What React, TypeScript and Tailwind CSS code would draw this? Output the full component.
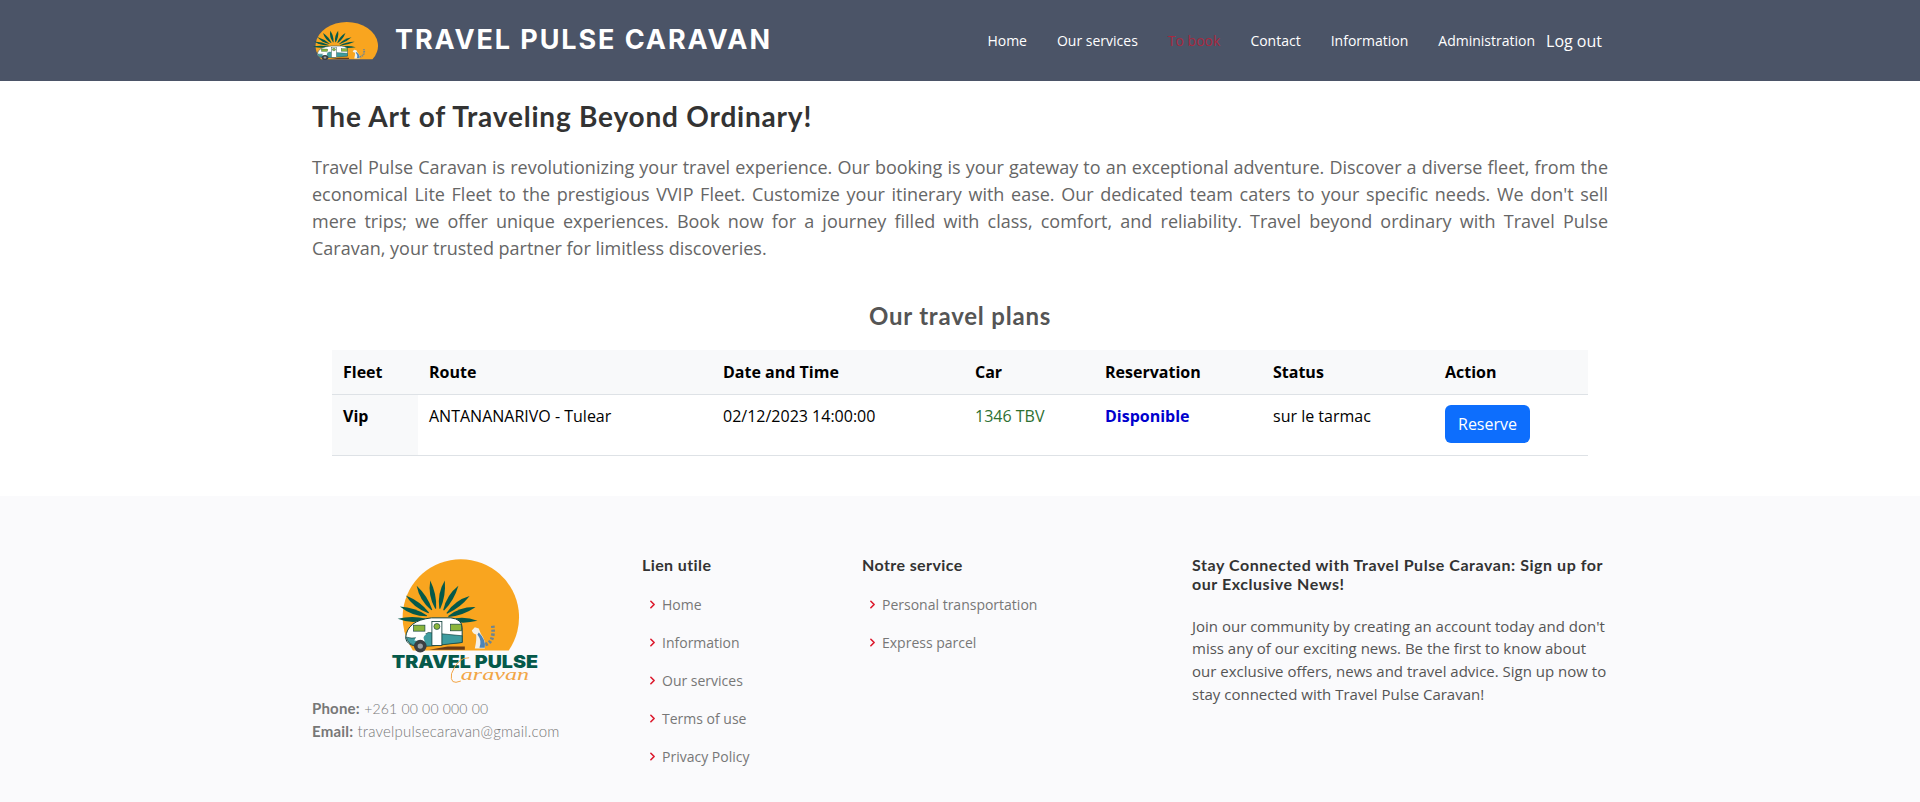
import { ChevronRight } from "lucide-react";

const navLinks = ["Home", "Our services", "To book", "Contact", "Information", "Administration"];
const usefulLinks = ["Home", "Information", "Our services", "Terms of use", "Privacy Policy"];
const serviceLinks = ["Personal transportation", "Express parcel"];
const columns = ["Fleet", "Route", "Date and Time", "Car", "Reservation", "Status", "Action"];
const frondAngles = [-90, -72, -54, -33, -12, 9, 30, 52, 70, 90];

function LogoScene() {
  return (
    <>
      <path d="M336 330 A175 175 0 1 1 624 330 Z" fill="#f9a51f" />
      {frondAngles.map((angle) => (
        <path
          key={angle}
          d="M0 -34 Q-14 -78 3 -120 Q14 -76 3 -34 Z"
          fill="#05594a"
          transform={`translate(410 238) rotate(${angle})`}
        />
      ))}
      <path d="M314 292 Q318 240 392 232 L450 232 Q484 236 484 262 L484 306 L350 318 Q316 314 314 292 Z" fill="#fff" stroke="#12413c" strokeWidth="3" />
      <path d="M316 290 Q350 300 382 276 L484 286 L484 306 L390 317 L350 318 Q320 312 316 290 Z" fill="#3f9c9f" stroke="#12413c" strokeWidth="2" />
      <path d="M340 300 Q352 272 376 282 Q362 288 372 304 Z" fill="#fff" />
      <rect x="338" y="254" width="34" height="18" fill="#8cb63c" stroke="#12413c" strokeWidth="2" />
      <rect x="393" y="243" width="30" height="72" fill="#fff" stroke="#12413c" strokeWidth="2.5" />
      <circle cx="408" cy="258" r="9" fill="#8cb63c" stroke="#12413c" strokeWidth="2" />
      <rect x="449" y="251" width="33" height="20" fill="#8cb63c" stroke="#12413c" strokeWidth="2" />
      <path d="M440 318 L492 318 L492 328 L385 328 Z" fill="#6a3b16" />
      <circle cx="358" cy="317" r="19" fill="#3b3f42" />
      <circle cx="358" cy="317" r="8" fill="#9aa0a3" />
      <path d="M513 270 L522 260 L534 264 L540 280 Q556 300 552 324 L522 324 Q528 298 526 282 Q516 280 513 270 Z" fill="#f4f1e8" />
      <path d="M534 276 Q556 298 552 322 L536 322 Q544 300 530 282 Z" fill="#4d84b8" />
      <path d="M554 312 Q582 304 576 256" fill="none" stroke="#6e8592" strokeWidth="11" strokeDasharray="7 5" />
    </>
  );
}

function FooterLogo() {
  return (
    <svg viewBox="270 50 445 395" className="mx-auto h-[132px] w-[148px]">
      <LogoScene />
      <text x="272" y="382" fill="#05594a" fontFamily="Inter, sans-serif" fontSize="54" fontWeight="900" textLength="440" lengthAdjust="spacingAndGlyphs">
        TRAVEL PULSE
      </text>
      <text x="480" y="420" fill="#f2a545" fontFamily="'Liberation Serif', serif" fontStyle="italic" fontSize="50" textLength="205" lengthAdjust="spacingAndGlyphs">
        aravan
      </text>
      <path d="M505 352 Q470 350 452 400 Q446 436 480 422" fill="none" stroke="#f2a545" strokeWidth="3" />
    </svg>
  );
}

function HeaderLogo() {
  return (
    <svg viewBox="285 55 370 280" preserveAspectRatio="none" className="h-[38px] w-[66px]">
      <LogoScene />
    </svg>
  );
}

function FooterLinks({ items }: { items: string[] }) {
  return (
    <ul className="mt-[19px] flex flex-col gap-4 pl-[4px] font-['Open_Sans',sans-serif] text-[14px] leading-[22px] text-[#777777]">
      {items.map((item) => (
        <li className="flex items-center gap-[3px]" key={item}>
          <ChevronRight className="h-[13px] w-[13px] text-[#dc1a2e]" strokeWidth={3} />
          {item}
        </li>
      ))}
    </ul>
  );
}

export default function App() {
  return (
    <div className="h-[802px] overflow-hidden bg-white font-['Open_Sans',sans-serif]">
      <header className="h-[81px] bg-[#4b5467]">
        <div className="mx-auto flex h-full w-[1296px] items-center justify-between">
          <div className="flex items-center gap-[17px]">
            <HeaderLogo />
            <span className="font-['Inter',sans-serif] text-[27px] font-bold tracking-[1.9px] text-white">TRAVEL PULSE CARAVAN</span>
          </div>
          <nav className="flex items-center pr-[6px]">
            {navLinks.map((link) => (
              <a
                className={`px-[15px] text-[14px] font-medium ${link === "To book" ? "text-[#a8283f]" : "text-white"}`}
                href="#"
                key={link}
              >
                {link}
              </a>
            ))}
            <a className="-ml-[4px] text-[16px] text-white" href="#">
              Log out
            </a>
          </nav>
        </div>
      </header>

      <main className="mx-auto w-[1296px]">
        <h1 className="mt-[17px] font-['Lato',sans-serif] text-[28px] font-bold leading-[36px] tracking-[0.8px] text-[#333333]">
          The Art of Traveling Beyond Ordinary!
        </h1>
        <p className="mt-[20px] text-justify text-[18px] leading-[27px] text-[#666666]">
          Travel Pulse Caravan is revolutionizing your travel experience. Our booking is your gateway to an exceptional adventure. Discover a diverse fleet, from the economical Lite Fleet to the prestigious VVIP Fleet. Customize your itinerary with ease. Our dedicated team caters to your specific needs. We don't sell mere trips; we offer unique experiences. Book now for a journey filled with class, comfort, and reliability. Travel beyond ordinary with Travel Pulse Caravan, your trusted partner for limitless discoveries.
        </p>
        <h2 className="mt-[39px] text-center font-['Lato',sans-serif] text-[24px] font-bold leading-[30px] tracking-[0.8px] text-[#555555]">Our travel plans</h2>

        <div className="mt-[19px] px-5">
          <table className="w-full table-fixed border-collapse text-[16px] text-black">
            <colgroup>
              <col className="w-[86px]" />
              <col className="w-[294px]" />
              <col className="w-[252px]" />
              <col className="w-[130px]" />
              <col className="w-[168px]" />
              <col className="w-[172px]" />
              <col className="w-[154px]" />
            </colgroup>
            <thead>
              <tr className="h-[44px] border-b border-[#dee2e6] bg-[#f8f9fa]">
                {columns.map((column) => (
                  <th className="px-[11px] text-left font-bold" key={column}>
                    {column}
                  </th>
                ))}
              </tr>
            </thead>
            <tbody>
              <tr className="border-b border-[#dee2e6] align-top leading-[24px]">
                <td className="bg-[#f8f9fa] px-[11px] pb-[20px] pt-[9px] font-bold">Vip</td>
                <td className="px-[11px] pt-[9px]">ANTANANARIVO - Tulear</td>
                <td className="px-[11px] pt-[9px]">02/12/2023 14:00:00</td>
                <td className="px-[11px] pt-[9px] text-[#2e7031]">1346 TBV</td>
                <td className="px-[11px] pt-[9px] font-bold text-[#0000cd]">Disponible</td>
                <td className="px-[11px] pt-[9px]">sur le tarmac</td>
                <td className="px-[11px] pb-[12px] pt-[10px]">
                  <button className="h-[38px] rounded-md bg-[#0d6efd] px-[13px] text-white" type="button">
                    Reserve
                  </button>
                </td>
              </tr>
            </tbody>
          </table>
        </div>
      </main>

      <footer className="mt-[40px] h-[306px] bg-[#fafafc]">
        <div className="mx-auto grid w-[1296px] grid-cols-12 gap-x-6 pt-[60px]">
          <div className="col-span-3 pt-[1px]">
            <FooterLogo />
            <div className="mt-[8px] font-['Lato',sans-serif] text-[15px] font-light leading-[23.5px] tracking-[0.2px] text-[#777777]">
              <p>
                <strong className="font-bold">Phone:</strong> <span className="text-[14px]">+261 00 00 000 00</span>
              </p>
              <p>
                <strong className="font-bold">Email:</strong> travelpulsecaravan@gmail.com
              </p>
            </div>
          </div>
          <div className="col-span-2">
            <h4 className="-mt-[1px] font-['Lato',sans-serif] text-[16px] font-bold leading-[20px] tracking-[0.4px] text-[#333333]">Lien utile</h4>
            <FooterLinks items={usefulLinks} />
          </div>
          <div className="col-span-3">
            <h4 className="-mt-[1px] font-['Lato',sans-serif] text-[16px] font-bold leading-[20px] tracking-[0.4px] text-[#333333]">Notre service</h4>
            <FooterLinks items={serviceLinks} />
          </div>
          <div className="col-span-4">
            <h4 className="-mt-[1px] font-['Lato',sans-serif] text-[16px] font-bold leading-[19px] tracking-[0.55px] text-[#333333]">
              Stay Connected with Travel Pulse Caravan: Sign up for our Exclusive News!
            </h4>
            <p className="mt-[22px] text-[15px] leading-[22.8px] text-[#555555]">
              Join our community by creating an account today and don't miss any of our exciting news. Be the first to know about our exclusive offers, news and travel advice. Sign up now to stay connected with Travel Pulse Caravan!
            </p>
          </div>
        </div>
      </footer>
    </div>
  );
}
